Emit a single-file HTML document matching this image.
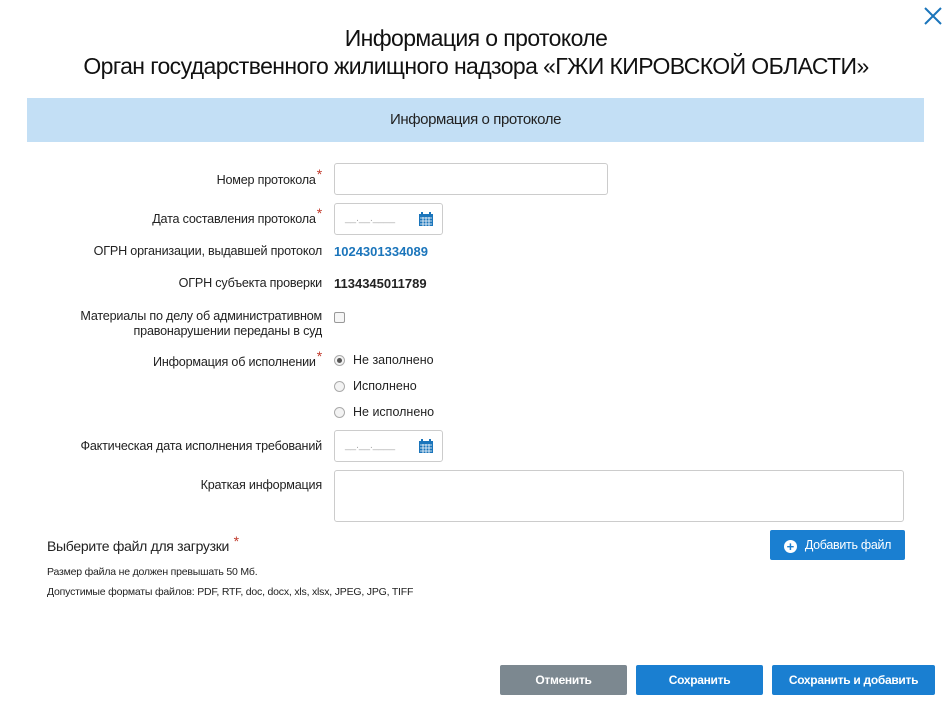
<!DOCTYPE html>
<html><head><meta charset="utf-8"><style>
body{margin:0;width:952px;height:708px;background:#fff;font-family:"Liberation Sans",sans-serif;color:#222;position:relative;overflow:hidden}
.a{position:absolute;white-space:nowrap}
.t{left:0;width:952px;text-align:center;font-size:23px;letter-spacing:-0.6px;color:#111}
.bar{left:27px;top:98px;width:897px;height:44px;background:#c3dff5;text-align:center;line-height:44px;font-size:15px;letter-spacing:-0.4px}
.lbl{right:630px;font-size:12.6px;text-align:right;letter-spacing:-0.2px}
.st{color:#c0392b;font-size:14px;position:relative;top:-5px;margin-left:1px}
.in{border:1px solid #ccc;border-radius:3px;background:#fff;box-sizing:border-box}
.rad{width:11px;height:11px;border:1px solid #aaa;border-radius:50%;background:#f3f3f3;box-sizing:border-box}
.rt{font-size:12.5px;left:353px}
.btn{color:#fff;font-size:12px;text-align:center;line-height:30px;height:30px;border-radius:2px;letter-spacing:-0.3px}
.cal{position:absolute;right:9px;top:8px}
.dash{position:absolute;left:10px;top:9px;font-size:10px;color:#aaa}
</style></head><body>
<svg class="a" style="left:922px;top:5px" width="22" height="22" viewBox="0 0 22 22"><path d="M3 3L19 19M19 3L3 19" stroke="#1b75bb" stroke-width="2"/></svg>
<div class="a t" style="top:25px">Информация о протоколе</div>
<div class="a t" style="top:53px">Орган государственного жилищного надзора «ГЖИ КИРОВСКОЙ ОБЛАСТИ»</div>
<div class="a bar">Информация о протоколе</div>

<div class="a lbl" style="top:171px">Номер протокола<span class="st">*</span></div>
<div class="a in" style="left:334px;top:163px;width:274px;height:32px"></div>

<div class="a lbl" style="top:210px">Дата составления протокола<span class="st">*</span></div>
<div class="a in" style="left:334px;top:203px;width:109px;height:32px"><div class="dash">__.__.____</div>
<svg class="cal" width="14" height="14" viewBox="0 0 14 14"><rect x="0" y="2" width="14" height="12" fill="#1b75bb"/><rect x="2" y="0" width="2" height="3" fill="#1b75bb"/><rect x="10" y="0" width="2" height="3" fill="#1b75bb"/><path d="M1 6H13M1 9H13M1 12H13M4 5V14M7 5V14M10 5V14" stroke="#fff" stroke-width="0.8"/></svg></div>

<div class="a lbl" style="top:244px">ОГРН организации, выдавшей протокол</div>
<div class="a" style="left:334px;top:244px;font-size:13px;font-weight:bold;color:#1b75bb">1024301334089</div>
<div class="a lbl" style="top:276px">ОГРН субъекта проверки</div>
<div class="a" style="left:334px;top:276px;font-size:13px;font-weight:bold;color:#222">1134345011789</div>

<div class="a lbl" style="top:309px;line-height:15px">Материалы по делу об административном<br>правонарушении переданы в суд</div>
<div class="a in" style="left:334px;top:312px;width:11px;height:11px;border-color:#999;border-radius:2px;background:#f6f6f6"></div>

<div class="a lbl" style="top:353px">Информация об исполнении<span class="st">*</span></div>
<div class="a rad" style="left:334px;top:355px"><div style="width:5px;height:5px;border-radius:50%;background:#555;margin:2px"></div></div>
<div class="a rt" style="top:353px">Не заполнено</div>
<div class="a rad" style="left:334px;top:381px"></div>
<div class="a rt" style="top:379px">Исполнено</div>
<div class="a rad" style="left:334px;top:407px"></div>
<div class="a rt" style="top:405px">Не исполнено</div>

<div class="a lbl" style="top:439px">Фактическая дата исполнения требований</div>
<div class="a in" style="left:334px;top:430px;width:109px;height:32px"><div class="dash">__.__.____</div>
<svg class="cal" width="14" height="14" viewBox="0 0 14 14"><rect x="0" y="2" width="14" height="12" fill="#1b75bb"/><rect x="2" y="0" width="2" height="3" fill="#1b75bb"/><rect x="10" y="0" width="2" height="3" fill="#1b75bb"/><path d="M1 6H13M1 9H13M1 12H13M4 5V14M7 5V14M10 5V14" stroke="#fff" stroke-width="0.8"/></svg></div>

<div class="a lbl" style="top:478px">Краткая информация</div>
<div class="a in" style="left:334px;top:470px;width:570px;height:52px"></div>

<div class="a" style="left:47px;top:538px;font-size:14px;letter-spacing:-0.3px">Выберите файл для загрузки <span class="st">*</span></div>
<div class="a" style="left:47px;top:566px;font-size:10.5px;letter-spacing:-0.2px">Размер файла не должен превышать 50 Мб.</div>
<div class="a" style="left:47px;top:586px;font-size:10.5px;letter-spacing:-0.2px">Допустимые форматы файлов: PDF, RTF, doc, docx, xls, xlsx, JPEG, JPG, TIFF</div>

<div class="a btn" style="left:770px;top:530px;width:135px;background:#1a7fd1;font-size:12.5px"><span style="display:inline-block;width:13px;height:13px;border-radius:50%;background:#fff;color:#1a7fd1;font-weight:bold;font-size:13px;line-height:13px;vertical-align:-2px;margin-right:8px">+</span>Добавить файл</div>

<div class="a btn" style="left:500px;top:665px;width:127px;background:#7c8890;font-weight:bold">Отменить</div>
<div class="a btn" style="left:636px;top:665px;width:127px;background:#1a7fd1;font-weight:bold">Сохранить</div>
<div class="a btn" style="left:772px;top:665px;width:163px;background:#1a7fd1;font-weight:bold">Сохранить и добавить</div>
</body></html>
